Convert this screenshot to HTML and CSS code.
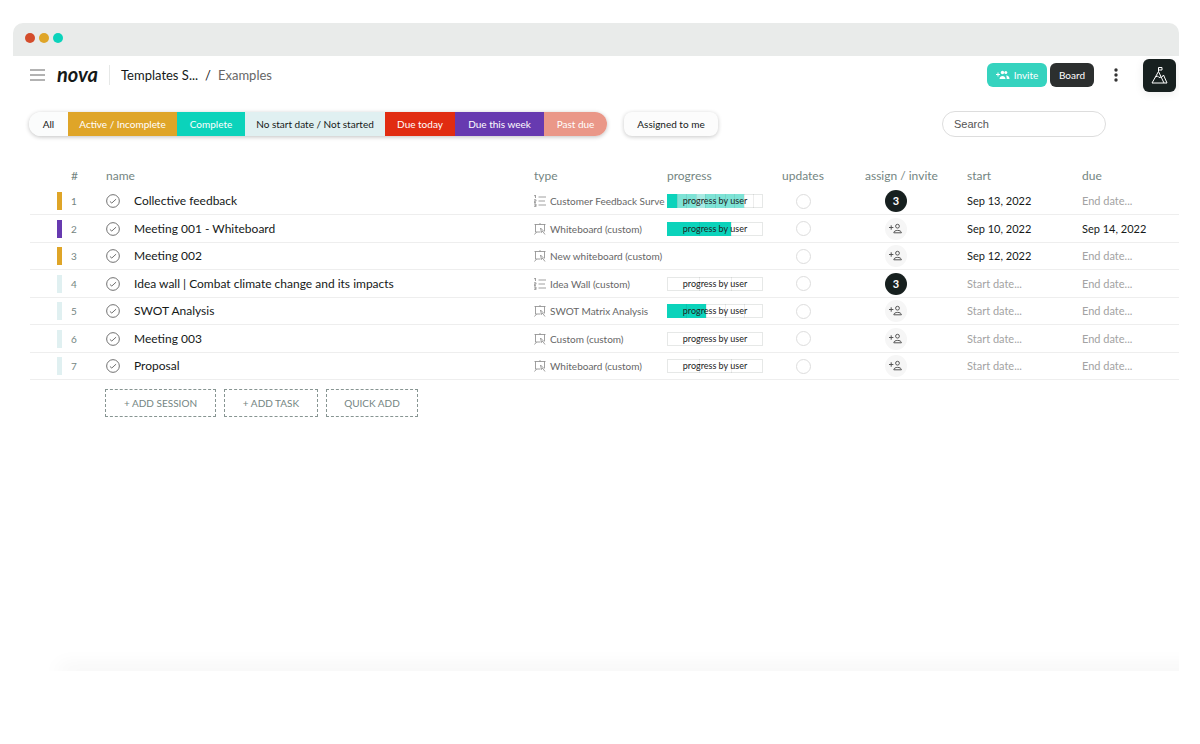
FILE: index.html
```html
<!DOCTYPE html>
<html lang="en">
<head>
<meta charset="utf-8">
<title>nova - Examples</title>
<link rel="stylesheet" href="styles.css">
</head>
<body>
<svg class="sprite" aria-hidden="true">
  <symbol id="check" viewBox="0 0 15 15"><circle cx="7.5" cy="7.5" r="6.8"/><path d="M4.200 8l2 1.700 4.600-4.200"/></symbol>
  <symbol id="list" viewBox="0 0 12 12"><path d="M4.500 2H12M4.500 6H11M4.500 10H12M1.500 0v3M0 1l1.500-1M0 4.800h2v1.400H0v1.400h2M0 9h2v2.700H0M.5 10.300H2"/></symbol>
  <symbol id="board" viewBox="0 0 12 12"><path d="M.5 1.500h11M1.500 1.500v7.500h5M10.500 1.500v7M6 0v1.500M2.500 9L.5 11.500M6.500 5l1 4.500 1-1.500 2.500 3.500M6.500 5L9.500 8"/></symbol>
  <symbol id="person" viewBox="0 0 14 12"><circle cx="8.500" cy="3.200" r="1.900"/><path d="M4.800 9.800c0-3.200 7.600-3.200 7.600 0zM0 4.500h4.400M2.200 2.300v4.400"/></symbol>
</svg>
<div class="window">
  <div class="titlebar"><i class="dot dot-red"></i><i class="dot dot-yellow"></i><i class="dot dot-green"></i></div>
  <header class="header">
    <button class="plain menu" aria-label="Menu"><svg width="15" height="12" viewBox="0 0 15 12"><path d="M0 1h15M0 6h15M0 11h15"/></svg></button>
    <a class="logo" href="#">nova</a>
    <nav class="crumbs"><a href="#">Templates S...</a><span>/</span><a class="current" href="#">Examples</a></nav>
    <div class="actions">
      <button class="btn invite"><svg width="14" height="10" viewBox="0 0 14 10"><path class="line" d="M0 4.500h4M2 2.500v4"/><circle cx="6.500" cy="2.500" r="1.700"/><circle cx="9.800" cy="2.500" r="1.500"/><path d="M3.500 9c0-4 6-4 6 0zM10 5.500c2.500 0 3.500 1.500 3.500 3.500h-2.800c0-1.500 0-2.500-.7-3.500z"/></svg>Invite</button>
      <button class="btn dark">Board</button>
      <button class="plain more" aria-label="More"><svg width="4" height="14" viewBox="0 0 4 14"><circle cx="2" cy="2" r="1.700"/><circle cx="2" cy="7" r="1.700"/><circle cx="2" cy="12" r="1.700"/></svg></button>
      <button class="workspace" aria-label="Workspace"><svg width="17" height="17" viewBox="0 0 17 17"><path d="M1 16L7.500 4.500 13 16zM10.500 10.500l2-2.500L16 16h-3M7.500 4.500V.5H11v2.500H7.500M4.500 10l2-1 1.500 1.500L10 10"/></svg></button>
    </div>
  </header>
  <div class="toolbar">
    <div class="filters">
      <button class="f-all">All</button><button class="f-active">Active / Incomplete</button><button class="f-complete">Complete</button><button class="f-none">No start date / Not started</button><button class="f-today">Due today</button><button class="f-week">Due this week</button><button class="f-past">Past due</button>
    </div>
    <button class="assigned">Assigned to me</button>
    <input class="search" type="search" placeholder="Search" aria-label="Search">
  </div>
  <main class="content">
    <table class="tasks">
      <colgroup><col class="c-status"><col class="c-num"><col><col class="c-type"><col class="c-progress"><col class="c-updates"><col class="c-assign"><col class="c-start"><col class="c-due"></colgroup>
      <thead><tr><th></th><th class="num-head">#</th><th>name</th><th>type</th><th>progress</th><th>updates</th><th>assign / invite</th><th>start</th><th>due</th></tr></thead>
      <tbody id="rows"></tbody>
    </table>
    <div class="adders"><button class="add-session">+ ADD SESSION</button><button class="add-task">+ ADD TASK</button><button class="quick">QUICK ADD</button></div>
  </main>
  <div class="bottom-shade"></div>
</div>
<script src="script.js"></script>
</body>
</html>
```
FILE: script.js
```js
const tasks = [
  { name: "Collective feedback", status: "active", icon: "list", type: "Customer Feedback Surve", assigned: 3, start: "Sep 13, 2022", parts: [[10, "full"], [10, "part-done"], [10, "part-done"], [10, "light"], [10, "part-done"], [10, "part-done"], [10, "part-done"], [10, "part-done"], [10, ""], [10, ""]] },
  { name: "Meeting 001 - Whiteboard", status: "week", icon: "board", type: "Whiteboard (custom)", start: "Sep 10, 2022", due: "Sep 14, 2022", parts: [[33, "full"], [34, "full"], [33, ""]] },
  { name: "Meeting 002", status: "active", icon: "board", type: "New whiteboard (custom)", start: "Sep 12, 2022" },
  { name: "Idea wall | Combat climate change and its impacts", status: "none", icon: "list", type: "Idea Wall (custom)", assigned: 3, parts: [[33, ""], [34, ""], [33, ""]] },
  { name: "SWOT Analysis", status: "none", icon: "board", type: "SWOT Matrix Analysis", parts: [[20, "full"], [21, "full"], [19, ""], [20, ""], [20, ""]] },
  { name: "Meeting 003", status: "none", icon: "board", type: "Custom (custom)", parts: [[100, ""]] },
  { name: "Proposal", status: "none", icon: "board", type: "Whiteboard (custom)", parts: [[33, ""], [34, ""], [33, ""]] }
];

const icon = (id, cls) => `<svg class="${cls}" aria-hidden="true"><use href="#${id}"/></svg>`;

const progress = parts => !parts ? "" :
  `<div class="progress">${parts.map(([w, c]) => `<i class="part ${c}" style="width:${w}%"></i>`).join("")}<span>progress by user</span></div>`;

const row = (t, i) => `<tr>
  <td><i class="stripe s-${t.status}"></i></td>
  <td class="num">${i + 1}</td>
  <td><div class="name"><button class="plain" aria-label="Complete ${t.name}">${icon("check", "check")}</button>${t.name}</div></td>
  <td><div class="type">${icon(t.icon, "type-icon")}<span>${t.type}</span></div></td>
  <td>${progress(t.parts)}</td>
  <td><button class="update" aria-label="Updates"></button></td>
  <td>${t.assigned ? `<button class="who count">${t.assigned}</button>` : `<button class="who" aria-label="Assign">${icon("person", "person")}</button>`}</td>
  <td><input class="date" aria-label="Start date" placeholder="Start date..." value="${t.start || ""}"></td>
  <td><input class="date" aria-label="Due date" placeholder="End date..." value="${t.due || ""}"></td>
</tr>`;

document.getElementById("rows").innerHTML = tasks.map(row).join("");
```
FILE: styles.css
```css
* { box-sizing: border-box; }
body { margin: 0; min-height: 100vh; padding: 23px 21px 73px 13px; display: flex; flex-direction: column; background: #fff; color: #151918; font: 12px/16px Lato, "Open Sans", sans-serif; }
button, input { font: inherit; color: inherit; border: 0; margin: 0; padding: 0; background: none; }
button { cursor: pointer; }
a { color: inherit; text-decoration: none; }
svg { display: block; fill: none; stroke: currentColor; }
.sprite { position: absolute; width: 0; height: 0; }
.plain { display: flex; }
.window { flex: 1; display: flex; flex-direction: column; overflow: hidden; border-radius: 10px 10px 0 0; }
.titlebar { height: 33px; padding: 0 12px; display: flex; align-items: center; gap: 4px; background: #e9ebea; }
.dot { width: 10px; height: 10px; margin-top: -3px; border-radius: 50%; }
.dot-red { background: #d44d2c; }
.dot-yellow { background: #dfa528; }
.dot-green { background: #0bd3bb; }
.header { display: flex; align-items: center; height: 38px; padding: 0 3px 0 17px; }
.menu { color: #666; margin-right: 12px; }
.logo { width: 53px; height: 20px; font-size: 20px; line-height: 18px; font-weight: 700; font-style: italic; border-right: 1px solid #e6e8e7; }
.crumbs { display: flex; gap: 7px; padding-left: 11px; font-size: 13px; }
.current { color: #666; }
.actions { margin-left: auto; display: flex; align-items: center; }
.btn { height: 24px; padding: 0 8px; display: flex; align-items: center; justify-content: center; gap: 4px; border-radius: 6px; color: #fff; font-size: 10px; }
.invite { width: 60px; background: #35d3bf; margin-right: 3px; }
.invite svg { fill: #fff; stroke: none; }
.invite .line { stroke: #fff; }
.dark { width: 44px; background: #2c2f2f; }
.more { margin: 0 25px 0 20px; color: #333; }
.more svg { fill: #333; stroke: none; }
.workspace { width: 33px; height: 33px; display: grid; place-items: center; border-radius: 6px; background: #17201f; color: #fff; box-shadow: 0 2px 10px rgba(0,0,0,.08); }
.toolbar { display: flex; align-items: center; margin-top: 17px; padding: 0 73px 0 16px; font-size: 11px; }
.filters { display: flex; height: 24px; border-radius: 12px; overflow: hidden; color: #fff; box-shadow: 0 1px 4px rgba(0,0,0,.25); }
.filters button { white-space: nowrap; font-size: 10px; }
.filters .f-all { width: 39px; background: #fbfcfc; color: #151918; }
.f-active { width: 109px; background: #dfa528; }
.f-complete { width: 68px; background: #0bd3bb; }
.filters .f-none { width: 140px; background: #e0f0f1; color: #151918; }
.f-today { width: 70px; background: #e12c11; }
.f-week { width: 89px; background: #673ab0; }
.f-past { width: 63px; background: #ea9788; }
.assigned { width: 94px; height: 24px; margin-left: 17px; border-radius: 8px; background: #fcfcfc; font-size: 10px; box-shadow: 0 1px 4px rgba(0,0,0,.22); }
.search { width: 164px; height: 26px; margin-left: auto; padding: 0 11px; border: 1px solid #ddd; border-radius: 13px; font: 11px/16px "Liberation Sans", Arial, sans-serif; appearance: none; }
.search::placeholder { color: #555; }
.content { padding: 26px 0 0 17px; }
.tasks { width: 100%; table-layout: fixed; border-collapse: separate; border-spacing: 0; }
.c-status { width: 36px; }
.c-num { width: 40px; }
.c-type { width: 133px; }
.c-progress { width: 115px; }
.c-updates { width: 83px; }
.c-assign { width: 102px; }
.c-start { width: 115px; }
.c-due { width: 97px; }
th { height: 25px; padding: 0; text-align: left; font-weight: 400; color: #748582; white-space: nowrap; }
.num-head, .num { padding-left: 5px; }
td { height: 27px; padding: 0; border-bottom: 1px solid #eee; }
tr:nth-child(even) td { height: 28px; }
.stripe { display: block; width: 5px; height: 18px; margin-left: 27px; }
.s-active { background: #dfa528; }
.s-week { background: #673ab0; }
.s-none { background: #e0f0f1; }
.num { color: #748582; font-size: 10px; }
.name { display: flex; align-items: center; gap: 14px; }
.check { width: 14px; height: 14px; color: #666; }
.type { display: flex; align-items: center; gap: 4px; margin-right: 4px; color: #666; font-size: 10px; white-space: nowrap; }
.type-icon { flex: none; width: 12px; height: 12px; stroke-width: .8; color: #888; }
.progress { position: relative; display: flex; width: 96px; height: 14px; box-shadow: inset 0 0 0 1px #e6e8e7; }
.progress span { position: absolute; inset: 0; font-size: 9px; line-height: 14px; text-align: center; color: #222; }
.part { height: 14px; }
.part + .part { border-left: 1px solid rgba(0,0,0,.07); }
.full { background: #0bd3bb; }
.part-done { background: #7ee3d6; }
.light { background: #a8ebe3; }
.update { display: block; width: 15px; height: 15px; margin-left: 14px; border: 1px solid #ddd; border-radius: 50%; }
.who { display: grid; place-items: center; width: 22px; height: 22px; margin-left: 20px; border-radius: 50%; background: #f6f6f6; color: #555; }
.count { background: #17201f; color: #fff; font-size: 11px; font-weight: 700; }
.person { width: 14px; height: 12px; }
.date { display: block; width: 90px; height: 16px; font-size: 11px; }
.date::placeholder { color: #a3a3a3; }
.adders { display: flex; gap: 8px; padding: 9px 0 0 75px; }
.adders button { height: 28px; border: 1px dashed #879592; color: #748582; font-size: 10px; }
.adders .add-session { width: 111px; }
.add-task { width: 94px; }
.quick { width: 92px; }
.bottom-shade { height: 1px; margin: auto -20px -1px 50px; box-shadow: 0 0 20px 4px rgba(0,0,0,.07); }
```
